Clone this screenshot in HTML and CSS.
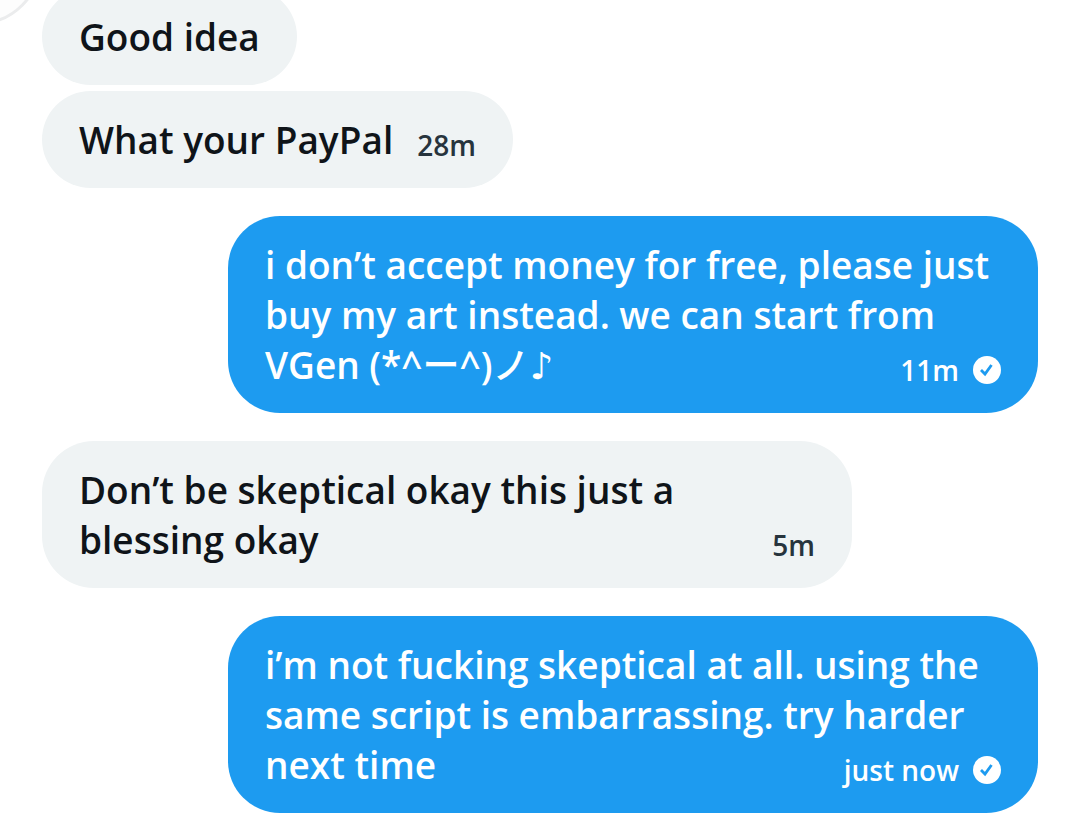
FILE: index.html
```html
<!DOCTYPE html>
<html lang="en">
<head>
    <meta charset="UTF-8">
    <meta name="viewport" content="width=device-width, initial-scale=1.0">
    <title>Messages</title>
    <link rel="stylesheet" href="styles.css">
</head>
<body>
    <div class="avatar"></div>
    <main class="chat">
        <div class="group received">
            <div class="message">
                Good idea
            </div>
            <div class="message">
                What your PayPal
                <span class="meta">28m</span>
            </div>
        </div>
        <div class="group sent">
            <div class="message">
                i don’t accept money for free, please just buy my art instead. we can start from VGen (*^<span class="kana">ー</span>^)<span class="kana">ノ</span><span class="note">♪</span>
                <span class="meta">11m
                    <svg class="check" viewBox="0 0 28 28" role="img" aria-label="Sent">
                        <circle cx="14" cy="14" r="14" fill="#fff"/>
                        <path d="M8 14l4 4 6.5-9" fill="none" stroke="#1d9bf0" stroke-width="2.8"/>
                    </svg>
                </span>
            </div>
        </div>
        <div class="group received">
            <div class="message">
                Don’t be skeptical okay this just a blessing okay
                <span class="meta">5m</span>
            </div>
        </div>
        <div class="group sent">
            <div class="message">
                i’m not fucking skeptical at all. using the same script is embarrassing. try harder next time
                <span class="meta">just now
                    <svg class="check" viewBox="0 0 28 28" role="img" aria-label="Sent">
                        <circle cx="14" cy="14" r="14" fill="#fff"/>
                        <path d="M8 14l4 4 6.5-9" fill="none" stroke="#1d9bf0" stroke-width="2.8"/>
                    </svg>
                </span>
            </div>
        </div>
    </main>
</body>
</html>
```
FILE: styles.css
```css
* {
    box-sizing: border-box;
}

body {
    margin: 0;
    background: #fff;
    font-family: "Open Sans", "Noto Sans CJK JP", sans-serif;
}

/* bottom of the sender's avatar, scrolled mostly out of view */
.avatar {
    position: absolute;
    left: -86px;
    top: -103px;
    width: 128px;
    height: 128px;
    background: #fdfdfd;
    border: 3px solid #ebeced;
    border-radius: 50%;
}

.chat {
    display: flex;
    flex-direction: column;
    gap: 28px;
    margin-top: -12px;
    padding: 0 42px 24px;
}

.group {
    display: flex;
    flex-direction: column;
    gap: 6px;
}

.received {
    align-items: flex-start;
}

.sent {
    align-items: flex-end;
}

.message {
    display: flow-root;
    max-width: 810px;
    padding: 24px 37px 23px;
    border-radius: 52px;
    font-size: 37px;
    font-weight: 600;
    line-height: 50px;
}

.received .message {
    background: #eff3f4;
    color: #0f1419;
}

.sent .message {
    background: #1d9bf0;
    color: #fff;
}

/* the time sits on the last line of the text */
.meta {
    display: flex;
    align-items: center;
    float: right;
    gap: 14px;
    margin-top: 11px;
    margin-left: 24px;
    font-size: 28px;
    line-height: 38px;
}

.received .meta {
    color: #27343d;
}

.check {
    width: 28px;
    height: 28px;
}

.kana,
.note {
    line-height: 1;
}

.kana {
    font-family: "Noto Sans CJK JP", sans-serif;
    font-weight: 500;
}

.note {
    font-family: "DejaVu Sans", sans-serif;
    font-weight: 700;
}
```
